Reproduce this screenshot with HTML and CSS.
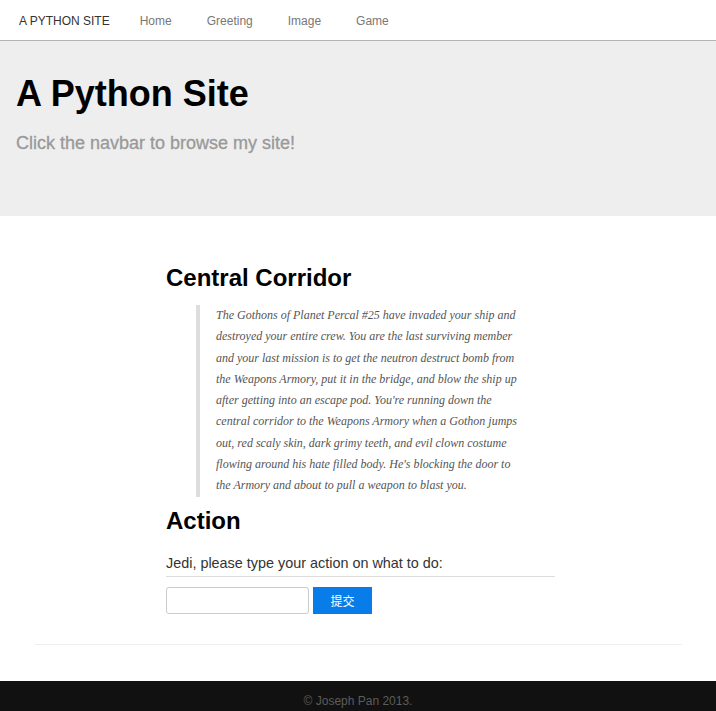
FILE: index.html
```html
<!DOCTYPE html>
<html lang="en">
<head>
    <meta charset="UTF-8">
    <meta name="viewport" content="width=device-width, initial-scale=1.0">
    <title>A Python Site</title>
    <link rel="stylesheet" href="styles.css">
</head>
<body>
    <div class="navbar">
        <a class="brand" href="#">A PYTHON SITE</a>
        <a href="#">Home</a>
        <a href="#">Greeting</a>
        <a href="#">Image</a>
        <a href="#">Game</a>
    </div>

    <div class="jumbotron">
        <h1>A Python Site</h1>
        <p>Click the navbar to browse my site!</p>
    </div>

    <div class="main">
        <h2>Central Corridor</h2>
        <blockquote>
            The Gothons of Planet Percal #25 have invaded your ship and
            destroyed your entire crew. You are the last surviving member
            and your last mission is to get the neutron destruct bomb from
            the Weapons Armory, put it in the bridge, and blow the ship up
            after getting into an escape pod. You're running down the
            central corridor to the Weapons Armory when a Gothon jumps
            out, red scaly skin, dark grimy teeth, and evil clown costume
            flowing around his hate filled body. He's blocking the door to
            the Armory and about to pull a weapon to blast you.
        </blockquote>

        <h2>Action</h2>
        <form class="action-form" action="#" onsubmit="return false;">
            <label for="action">Jedi, please type your action on what to do:</label>
            <hr>
            <div class="input-row">
                <input type="text" id="action" name="action">
                <button type="submit">提交</button>
            </div>
        </form>
    </div>

    <hr class="page-end">

    <div class="footer">© Joseph Pan 2013.</div>
</body>
</html>
```

FILE: styles.css
```css
* {
    box-sizing: border-box;
}

body {
    margin: 0;
    padding: 0;
    font-family: "Liberation Sans", Arial, sans-serif;
    color: #333;
    background-color: #fff;
}

a {
    text-decoration: none;
}

.navbar {
    display: flex;
    align-items: center;
    height: 41px;
    padding-top: 1px;
    border-bottom: 1px solid #b4b4b4;
    padding-left: 19px;
    font-size: 12px;
}

.navbar a {
    color: #777;
    margin-right: 35px;
}

.navbar .brand {
    color: #333;
    margin-right: 30px;
}

.jumbotron {
    background-color: #eee;
    height: 175px;
    padding: 33px 16px 0;
}

.jumbotron h1 {
    margin: 0;
    font-size: 36px;
    line-height: 40px;
    color: #000;
}

.jumbotron p {
    margin: 19px 0 0;
    font-size: 18px;
    color: #999;
    -webkit-text-stroke: 0.3px #999;
}

.main {
    width: 394px;
    margin: 0 auto;
    padding: 48px 0 0 5px;
}

.main h2 {
    margin: 0;
    font-size: 24px;
    line-height: 28px;
    color: #000;
}

blockquote {
    margin: 13px 30px 10px 30px;
    padding: 0 0 0 16px;
    width: 326px;
    border-left: 4px solid #ddd;
    font-family: "Liberation Serif", "Times New Roman", serif;
    font-style: italic;
    font-size: 12px;
    line-height: 21.3px;
    color: #555;
}

.action-form label {
    display: block;
    margin-top: 18px;
    font-size: 14.4px;
    line-height: 20px;
}

.action-form hr {
    margin: 3px 0 10px;
    border: 0;
    border-top: 1px solid #ddd;
}

.input-row {
    display: flex;
    gap: 4px;
}

.input-row input {
    width: 143px;
    height: 27px;
    margin: 0;
    border: 1px solid #ccc;
    border-radius: 3px;
}

.input-row button {
    width: 59px;
    height: 27px;
    border: none;
    background-color: #087ce8;
    color: #fff;
    font-family: "Noto Sans CJK SC", sans-serif;
    font-size: 12px;
    cursor: pointer;
}

.page-end {
    width: 647px;
    margin: 30px auto 36px;
    border: 0;
    border-top: 1px solid #eee;
}

.footer {
    background-color: #111;
    height: 40px;
    padding-top: 13px;
    text-align: center;
    font-size: 12px;
    color: #5c5c5c;
}
```
